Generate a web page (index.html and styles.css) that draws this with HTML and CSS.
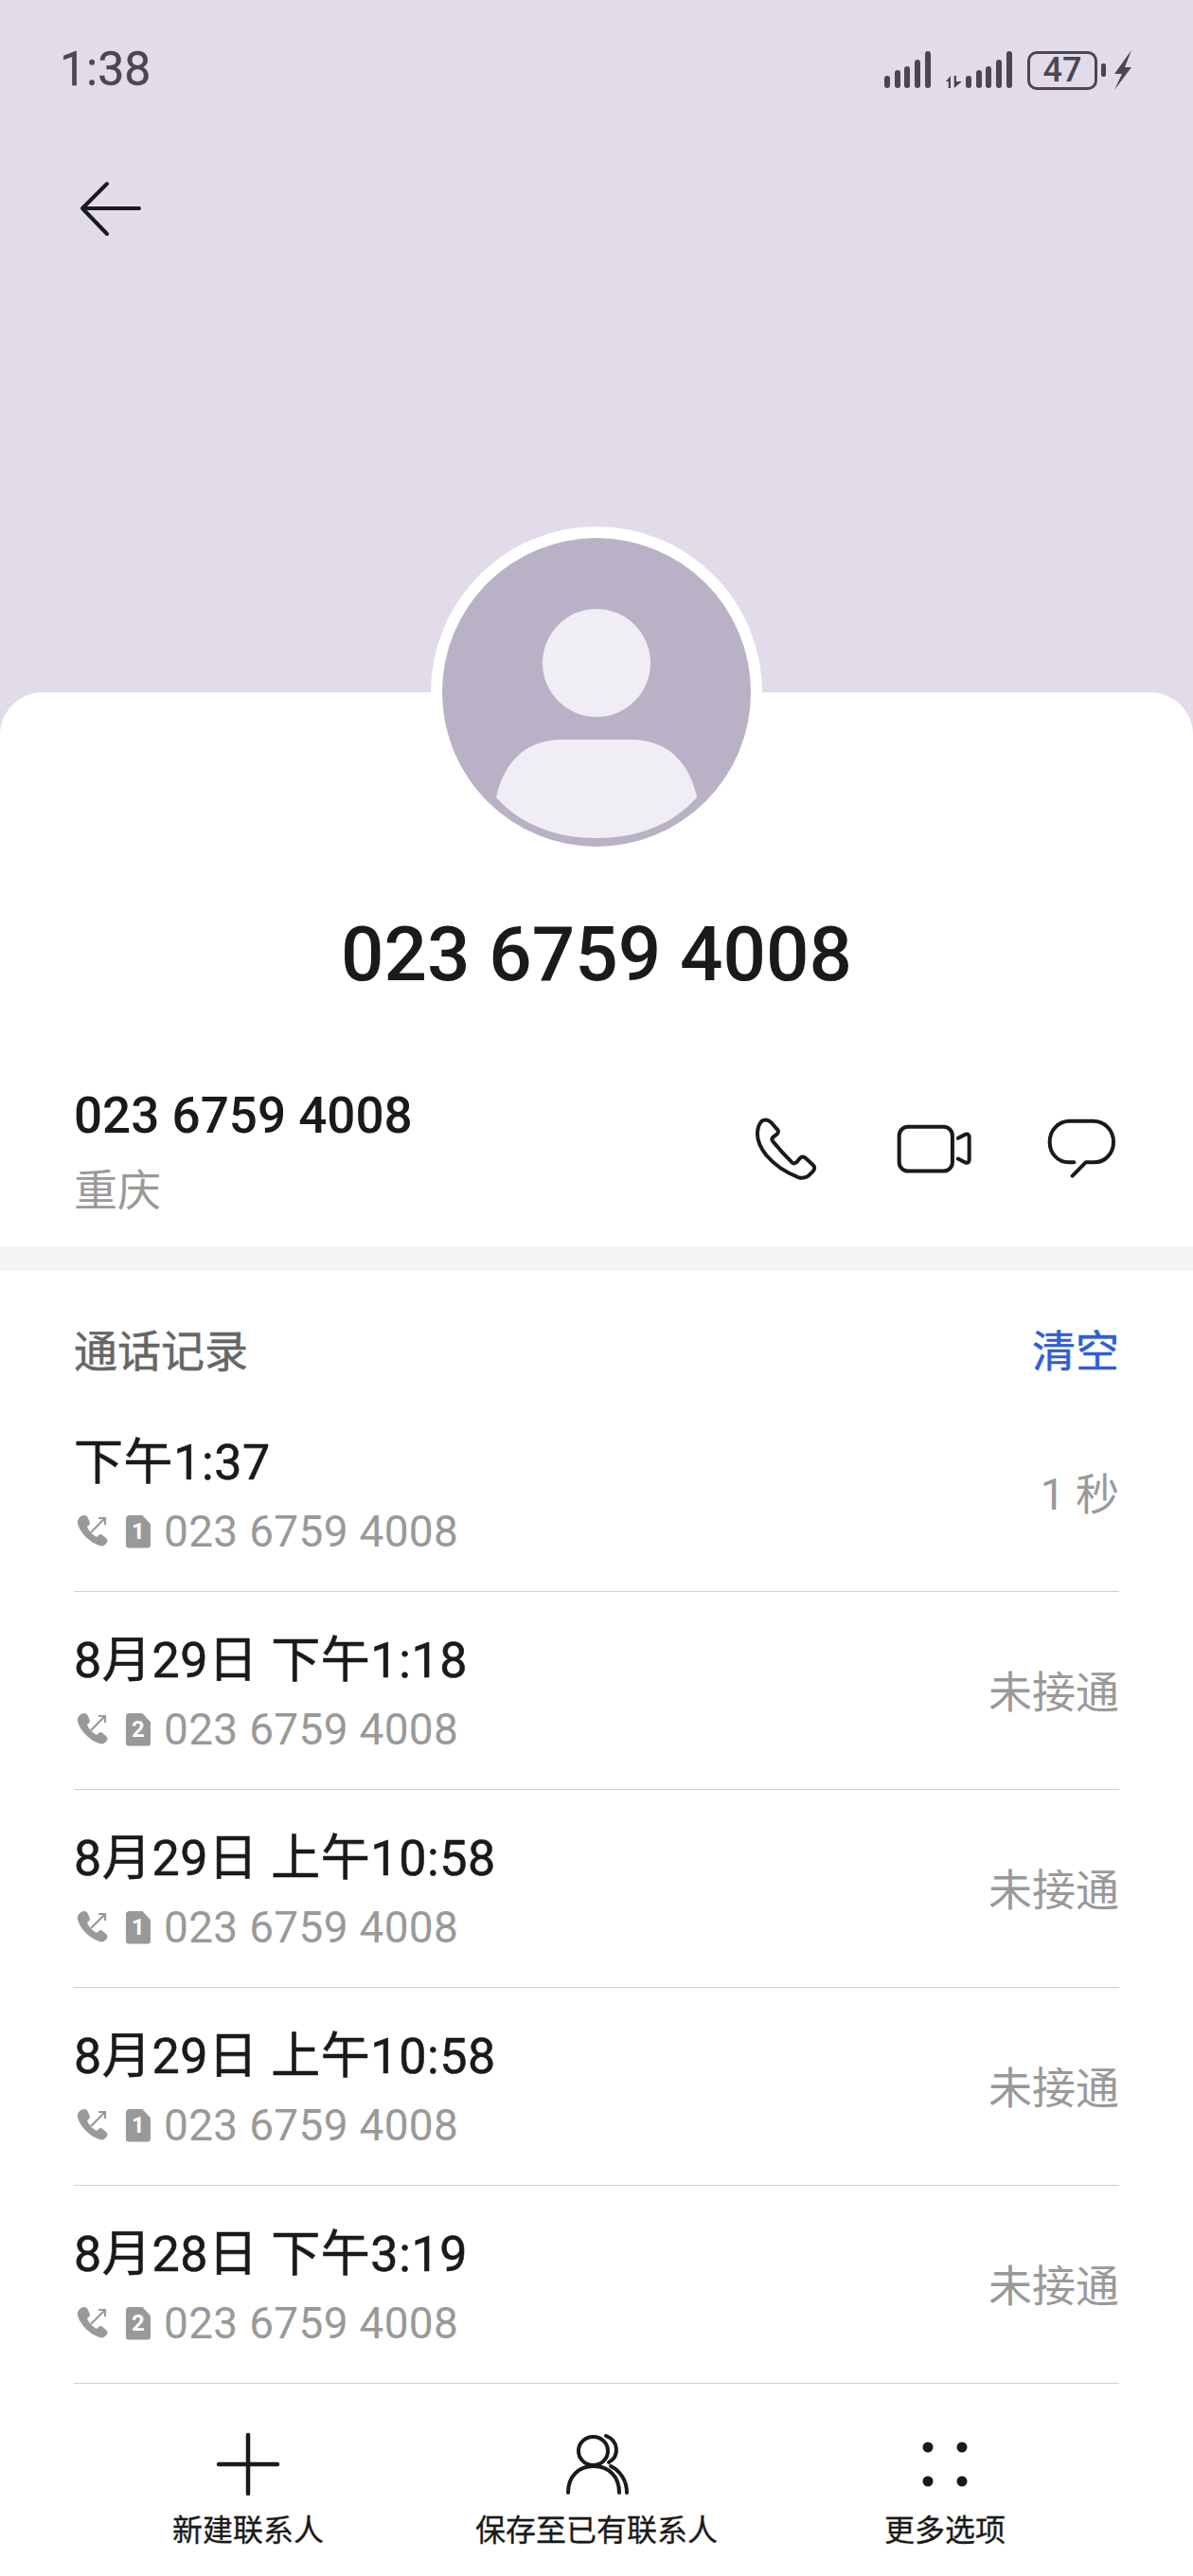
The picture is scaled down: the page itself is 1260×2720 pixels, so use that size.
FILE: index.html
```html
<!DOCTYPE html>
<html lang="zh-CN">
<head>
<meta charset="utf-8">
<title>023 6759 4008</title>
<link rel="stylesheet" href="styles.css">
</head>
<body>
<div class="screen">
  <header class="hero">
    <div class="status">
      <span class="clock">1:38</span>
      <div class="status-icons">
        <svg class="sig" width="50" height="42" viewBox="0 0 50 42"><g fill="#4a4750"><rect x="0" y="26" width="6" height="13" rx="3"/><rect x="11" y="20" width="6" height="19" rx="3"/><rect x="21" y="16" width="6" height="23" rx="3"/><rect x="32" y="9" width="6" height="30" rx="3"/><rect x="43" y="0" width="6" height="39" rx="3"/></g></svg>
        <svg class="sig2" width="71" height="42" viewBox="0 0 71 42"><g fill="#4a4750"><path d="M0 32 5 26V39H2.700V32ZM8.700 26H11V32H17L8.700 39Z"/><rect x="21" y="26" width="6" height="13" rx="3"/><rect x="32" y="20" width="6" height="19" rx="3"/><rect x="42" y="16" width="6" height="23" rx="3"/><rect x="53" y="9" width="6" height="30" rx="3"/><rect x="64" y="0" width="6" height="39" rx="3"/></g></svg>
        <div class="battery"><span class="battery-level">47</span></div>
        <span class="battery-nub"></span>
        <svg class="bolt" width="18" height="42" viewBox="0 0 18 42"><path fill="#4a4750" d="M18 0 0 25H8L0 42 18 18H11Z"/></svg>
      </div>
    </div>
    <svg class="back" width="66" height="62" viewBox="0 0 66 62"><path d="M3 30H63M3 30 29 4M3 30 29 57" fill="none" stroke="#1a1a1c" stroke-width="4" stroke-linecap="round"/></svg>
    <div class="avatar">
      <svg width="326" height="326" viewBox="0 0 326 326"><circle cx="163" cy="163" r="163" fill="#b9b2c6"/><circle cx="163" cy="132" r="57" fill="#f0edf4"/><path d="M57 274C64 240 86 213 126 213H200C240 213 262 240 269 274 244 302 207 317 163 317 119 317 82 302 57 274Z" fill="#f0edf4"/></svg>
    </div>
  </header>
  <main class="card">
    <h1 class="name">023 6759 4008</h1>
    <section class="contact">
      <div class="contact-text">
        <div class="number">023 6759 4008</div>
        <div class="place">重庆</div>
      </div>
      <div class="actions">
        <svg class="act-phone" width="68" height="68" viewBox="110 85 205 205"><path d="M135 100Q150 90 165 103L186 127Q191 134 184 141L172 150Q165 156 172 165 200 200 232 231 239 237 247 230L258 217Q264 210 274 216L298 238Q309 248 298 260L284 274Q270 284 252 278 190 255 150 208 120 170 122 135 124 112 135 100Z" fill="none" stroke="#1a1a1a" stroke-width="12" stroke-linejoin="round"/></svg>
        <svg class="act-video" width="82" height="57" viewBox="560 105 245 170"><rect x="571" y="119" width="168" height="140" rx="28" fill="none" stroke="#1a1a1a" stroke-width="12"/><path d="M757 155 780 143Q792 140 792 152V222Q792 235 780 232L757 220" fill="none" stroke="#1a1a1a" stroke-width="12" stroke-linecap="round" stroke-linejoin="round"/></svg>
        <svg class="act-chat" width="72" height="66" viewBox="1040 95 216 198"><path d="M1125 237H1108C1075 237 1048 210 1048 172 1048 135 1075 106 1112 106H1185C1222 106 1250 135 1250 172 1250 210 1222 237 1190 237H1162L1120 280" fill="none" stroke="#1a1a1a" stroke-width="12" stroke-linecap="round" stroke-linejoin="round"/></svg>
      </div>
    </section>
    <div class="band"></div>
    <section class="log">
      <div class="log-head"><span class="log-title">通话记录</span><span class="log-clear">清空</span></div>
      <ul class="log-list">
        <li class="entry">
          <div class="entry-main">
            <div class="entry-time">下午1:37</div>
            <div class="entry-sub">
              <svg class="ico-call" width="33" height="34" viewBox="-1 0 33 34"><use href="#call"/></svg>
              <span class="sim"><span class="sim-n">1</span></span>
              <span class="entry-num">023 6759 4008</span>
            </div>
          </div>
          <span class="entry-state">1 秒</span>
        </li>
        <li class="entry">
          <div class="entry-main">
            <div class="entry-time">8月29日 下午1:18</div>
            <div class="entry-sub">
              <svg class="ico-call" width="33" height="34" viewBox="-1 0 33 34"><use href="#call"/></svg>
              <span class="sim"><span class="sim-n">2</span></span>
              <span class="entry-num">023 6759 4008</span>
            </div>
          </div>
          <span class="entry-state">未接通</span>
        </li>
        <li class="entry">
          <div class="entry-main">
            <div class="entry-time">8月29日 上午10:58</div>
            <div class="entry-sub">
              <svg class="ico-call" width="33" height="34" viewBox="-1 0 33 34"><use href="#call"/></svg>
              <span class="sim"><span class="sim-n">1</span></span>
              <span class="entry-num">023 6759 4008</span>
            </div>
          </div>
          <span class="entry-state">未接通</span>
        </li>
        <li class="entry">
          <div class="entry-main">
            <div class="entry-time">8月29日 上午10:58</div>
            <div class="entry-sub">
              <svg class="ico-call" width="33" height="34" viewBox="-1 0 33 34"><use href="#call"/></svg>
              <span class="sim"><span class="sim-n">1</span></span>
              <span class="entry-num">023 6759 4008</span>
            </div>
          </div>
          <span class="entry-state">未接通</span>
        </li>
        <li class="entry">
          <div class="entry-main">
            <div class="entry-time">8月28日 下午3:19</div>
            <div class="entry-sub">
              <svg class="ico-call" width="33" height="34" viewBox="-1 0 33 34"><use href="#call"/></svg>
              <span class="sim"><span class="sim-n">2</span></span>
              <span class="entry-num">023 6759 4008</span>
            </div>
          </div>
          <span class="entry-state">未接通</span>
        </li>
      </ul>
    </section>
    <nav class="tabs">
      <div class="tab">
        <svg width="66" height="66" viewBox="0 0 66 66"><path d="M33 2V64M2 33H64" fill="none" stroke="#1a1a1a" stroke-width="4.500" stroke-linecap="round"/></svg>
        <span class="tab-label">新建联系人</span>
      </div>
      <div class="tab">
        <svg class="ico-person" width="66" height="66" viewBox="0 0 66 66"><g fill="none" stroke="#1a1a1a" stroke-width="4" stroke-linecap="round"><ellipse cx="29.500" cy="19" rx="15.500" ry="15"/><path d="M3 63C3 46 14 35 30 35 46 35 57 46 57 63"/><path d="M43 3C56 8 58 24 46 31"/><path d="M48 35C58 40 65 50 65 63"/></g></svg>
        <span class="tab-label">保存至已有联系人</span>
      </div>
      <div class="tab">
        <svg width="66" height="66" viewBox="0 0 66 66"><g fill="#1a1a1a"><circle cx="15" cy="15" r="5.500"/><circle cx="51" cy="15" r="5.500"/><circle cx="15" cy="51" r="5.500"/><circle cx="51" cy="51" r="5.500"/></g></svg>
        <span class="tab-label">更多选项</span>
      </div>
    </nav>
  </main>
  <svg class="defs" width="0" height="0"><defs><g id="call"><path fill="#999" d="M7 0C9 0 10 1 11 3L13 8C13 10 11 11 10 12 12 17 15 20 20 23 22 21 23 20 25 20L30 24C32 26 32 28 30 30 28 32 26 33 23 32 12 28 3 19 0 9-1 4 3 0 7 0Z"/><path d="M14 18 29 3M22 3H29V10" fill="none" stroke="#999" stroke-width="2.200"/></g></defs></svg>
</div>
</body>
</html>
```
FILE: styles.css
```css
* { box-sizing: border-box; }
html, body { margin: 0; padding: 0; }
body { background: #fff; font-family: Roboto, "Noto Sans CJK SC", "Noto Sans", sans-serif; color: #1a1a1a; }
.screen { width: 1260px; height: 2720px; overflow: hidden; position: relative; background: #fff; }
.defs { position: absolute; }

.hero { height: 776px; background: #e1dbea; position: relative; }
.status { display: flex; justify-content: space-between; align-items: center; height: 72px; padding: 36px 65px 0 63px; box-sizing: content-box; }
.clock { font-size: 50px; color: #4a4750; line-height: 72px; margin-top: 2px; -webkit-text-stroke: 0.4px #4a4750; }
.status-icons { display: flex; align-items: flex-start; margin-left: auto; margin-top: 8px; }
.sig { display: block; margin-top: -2px; }
.sig2 { display: block; margin-left: 15px; margin-top: -2px; }
.battery { width: 74px; height: 41px; margin-left: 15px; margin-top: -2px; border: 3px solid #4a4750; border-radius: 10px; display: flex; align-items: center; justify-content: center; }
.battery-level { font-size: 36px; line-height: 35px; font-weight: 500; color: #4a4750; }
.battery-nub { width: 5px; height: 14px; margin-left: 4px; margin-top: 11px; border-radius: 2px; background: #4a4750; }
.bolt { display: block; margin-left: 9px; margin-top: -3px; }
.back { display: block; margin: 82px 0 0 84px; }
.avatar { position: absolute; left: 455px; top: 556px; width: 350px; height: 350px; border-radius: 50%; background: #fff; display: flex; align-items: center; justify-content: center; z-index: 2; }
.avatar svg { display: block; }

.card { position: absolute; left: 0; top: 731px; width: 1260px; height: 1989px; background: #fff; border-radius: 45px 45px 0 0; }
.name { margin: 0; padding-top: 227px; text-align: center; font-size: 80px; line-height: 100px; font-weight: 500; color: #1a1a1a; }
.contact { display: flex; justify-content: space-between; align-items: center; padding: 0 78px; margin-top: 87px; height: 144px; }
.number { font-size: 53px; line-height: 60px; font-weight: 500; }
.place { font-size: 46px; line-height: 60px; margin-top: 19px; color: #999; }
.actions { display: flex; align-items: center; padding-bottom: 8px; padding-right: 4px; }
.act-phone { margin-right: 82px; }
.act-video { margin-right: 78px; }
.band { height: 26px; margin-top: 27px; background: #f5f5f5; }

.log { padding: 0 78px; }
.log-head { display: flex; justify-content: space-between; align-items: center; height: 60px; margin-top: 51px; margin-bottom: 19px; font-size: 46px; }
.log-title { color: #666; -webkit-text-stroke: 0.5px #666; }
.log-clear { color: #2f5fd6; -webkit-text-stroke: 0.5px #2f5fd6; }
.log-list { list-style: none; margin: 0; padding: 0; }
.entry { display: flex; justify-content: space-between; align-items: center; height: 209px; border-bottom: 1px solid #cfcfcf; }
.entry-main { margin-top: 5px; }
.entry-time { font-size: 52px; line-height: 60px; letter-spacing: 0.6px; -webkit-text-stroke: 0.6px #1a1a1a; }
.entry-sub { display: flex; align-items: center; margin-top: 17px; height: 50px; }
.ico-call { display: block; margin-left: 3px; }
.sim { margin-left: 19px; width: 26px; height: 35px; background: #999; border-radius: 4px; clip-path: polygon(0 0, 65% 0, 100% 28%, 100% 100%, 0 100%); display: flex; align-items: center; justify-content: center; }
.sim-n { color: #fff; font-size: 24px; line-height: 24px; font-weight: 700; }
.entry-num { margin-left: 14px; font-size: 46px; letter-spacing: 0.3px; color: #999; }
.entry-state { font-size: 46px; color: #999; padding-bottom: 4px; }

.tabs { position: absolute; left: 78px; right: 78px; top: 1838px; display: grid; grid-template-columns: repeat(3, 1fr); }
.tab { display: flex; flex-direction: column; align-items: center; }
.tab svg { display: block; overflow: visible; }
.tab-label { font-size: 32px; line-height: 44px; margin-top: 15px; color: #1a1a1a; -webkit-text-stroke: 0.3px #1a1a1a; }
```
